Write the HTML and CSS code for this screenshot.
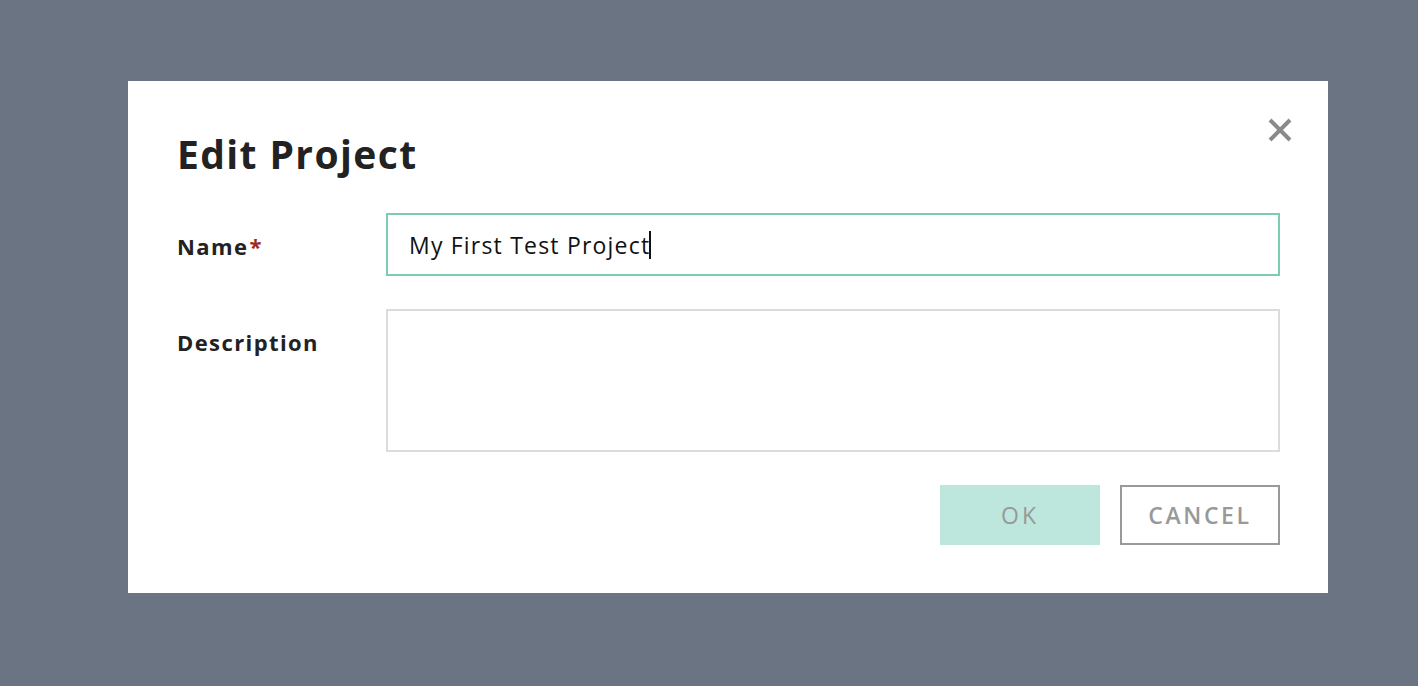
FILE: index.html
```html
<!DOCTYPE html>
<html>
<head>
<meta charset="utf-8">
<link rel="stylesheet" href="styles.css">
</head>
<body>
<div class="backdrop">
  <div class="modal">
    <button class="close" aria-label="Close">
      <svg width="24" height="24" viewBox="0 0 24 24"><path d="M2 2 L22 22 M22 2 L2 22" stroke="#8a8a8a" stroke-width="4" stroke-linecap="butt" fill="none"/></svg>
    </button>
    <h1 class="title">Edit Project</h1>
    <div class="row">
      <label class="label">Name<span class="req">*</span></label>
      <div class="field focused"><span class="value">My First Test Project</span><span class="caret"></span></div>
    </div>
    <div class="row">
      <label class="label">Description</label>
      <div class="field area"></div>
    </div>
    <div class="actions">
      <button class="btn ok">OK</button>
      <button class="btn cancel">CANCEL</button>
    </div>
  </div>
</div>
</body>
</html>
```
FILE: styles.css
```css
html, body {
  margin: 0;
  padding: 0;
  height: 100%;
}
body {
  background: #6b7483;
  font-family: "Open Sans", "Liberation Sans", sans-serif;
  color: #222;
}
.backdrop {
  padding-top: 81px;
  padding-left: 128px;
}
.modal {
  position: relative;
  width: 1200px;
  height: 512px;
  box-sizing: border-box;
  background: #fff;
  padding: 38px 48px 48px 49px;
}
.close {
  position: absolute;
  top: 37px;
  right: 36px;
  background: none;
  border: 0;
  padding: 0;
  width: 24px;
  height: 24px;
}
.close svg { display: block; }
.title {
  margin: 0;
  font-size: 39px;
  font-weight: 700;
  line-height: 70px;
  color: #222;
  letter-spacing: 1.4px;
}
.row {
  display: flex;
  margin-top: 24px;
}
.row + .row { margin-top: 33px; }
.label {
  width: 209px;
  flex: none;
  font-size: 22px;
  font-weight: 700;
  line-height: 26px;
  padding-top: 20px;
  color: #222;
  letter-spacing: 1.4px;
}
.req {
  color: #a0281e;
  margin-left: 1px;
}
.field {
  flex: 1;
  height: 63px;
  box-sizing: border-box;
  border: 2px solid #dcdcdc;
  display: flex;
  align-items: center;
  padding-left: 21px;
  font-size: 23px;
  color: #111;
}
.field.focused { border-color: #7ccbb4; }
.field.area { height: 143px; }
.value { letter-spacing: 1.2px; }
.caret {
  display: inline-block;
  width: 2px;
  height: 28px;
  background: #111;
  margin-left: -1px;
}
.actions {
  display: flex;
  justify-content: flex-end;
  gap: 20px;
  margin-top: 33px;
}
.btn {
  width: 160px;
  height: 60px;
  box-sizing: border-box;
  font-family: "Open Sans", "Liberation Sans", sans-serif;
  font-size: 23px;
  color: #999;
  padding: 0;
}
.ok {
  background: #bde6dc;
  border: 0;
  font-weight: 400;
  letter-spacing: 3px;
}
.cancel {
  background: #fff;
  border: 2px solid #999;
  font-weight: 600;
  letter-spacing: 2.6px;
}
```
